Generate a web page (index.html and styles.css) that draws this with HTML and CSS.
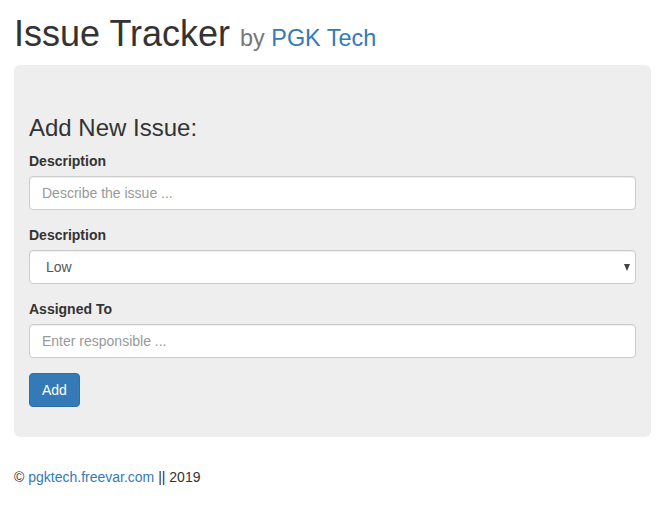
FILE: index.html
```html
<!DOCTYPE html>
<html>
<head>
<meta charset="utf-8">
<link rel="stylesheet" href="styles.css">
</head>
<body>
<div class="container">
  <h1 class="title">Issue Tracker <small class="by">by <a href="#">PGK Tech</a></small></h1>
  <div class="jumbotron">
    <h3 class="section-title">Add New Issue:</h3>
    <form class="issue-form">
      <div class="form-group">
        <label class="form-label">Description</label>
        <input class="form-control" type="text" placeholder="Describe the issue ...">
      </div>
      <div class="form-group">
        <label class="form-label">Description</label>
        <div class="select-wrap">
          <select class="form-control select-control">
            <option>Low</option>
            <option>Medium</option>
            <option>High</option>
          </select>
          <span class="select-arrow"></span>
        </div>
      </div>
      <div class="form-group">
        <label class="form-label">Assigned To</label>
        <input class="form-control" type="text" placeholder="Enter responsible ...">
      </div>
      <button type="button" class="btn-primary">Add</button>
    </form>
  </div>
  <p class="footer">© <a href="#">pgktech.freevar.com</a> || 2019</p>
</div>
</body>
</html>
```
FILE: styles.css
```css
* { box-sizing: border-box; }
html, body { margin: 0; padding: 0; }
body {
  font-family: "Liberation Sans", Arial, sans-serif;
  font-size: 14px;
  line-height: 1.42857143;
  color: #333;
  background: #fff;
}
a { color: #337ab7; text-decoration: none; }
.container {
  padding: 0 12px 0 14px;
}
.title {
  font-size: 36px;
  font-weight: 500;
  line-height: 1.1;
  margin: 14px 0 11px;
  color: #333;
}
.by {
  font-size: 65%;
  font-weight: 400;
  color: #777;
}
.jumbotron {
  background: #eee;
  border-radius: 6px;
  padding: 30px 15px;
  margin-bottom: 30px;
}
.section-title {
  font-size: 24px;
  font-weight: 500;
  line-height: 1.1;
  margin: 20px 0 10px;
}
.issue-form { margin: 0; }
.form-group { margin-bottom: 15px; }
.form-label {
  display: inline-block;
  font-weight: 700;
  margin-bottom: 5px;
  max-width: 100%;
}
.form-control {
  display: block;
  width: 100%;
  height: 34px;
  padding: 6px 12px;
  font-family: inherit;
  font-size: 14px;
  line-height: 1.42857143;
  color: #555;
  background: #fff;
  border: 1px solid #ccc;
  border-radius: 4px;
  box-shadow: inset 0 1px 1px rgba(0,0,0,.075);
  outline: none;
}
.form-control::placeholder { color: #999; opacity: 1; }
.select-wrap { position: relative; }
.select-control {
  appearance: none;
  -webkit-appearance: none;
  padding-left: 16px;
  color: #555;
}
.select-arrow {
  position: absolute;
  right: 6px;
  top: 14px;
  width: 0;
  height: 0;
  border-left: 3.5px solid transparent;
  border-right: 3.5px solid transparent;
  border-top: 7px solid #444;
  pointer-events: none;
}
.btn-primary {
  display: inline-block;
  height: 34px;
  padding: 6px 12px;
  font-family: inherit;
  font-size: 14px;
  line-height: 1.42857143;
  color: #fff;
  background: #337ab7;
  border: 1px solid #2e6da4;
  border-radius: 4px;
  cursor: pointer;
}
.footer {
  margin: 0 0 10px;
}
```
